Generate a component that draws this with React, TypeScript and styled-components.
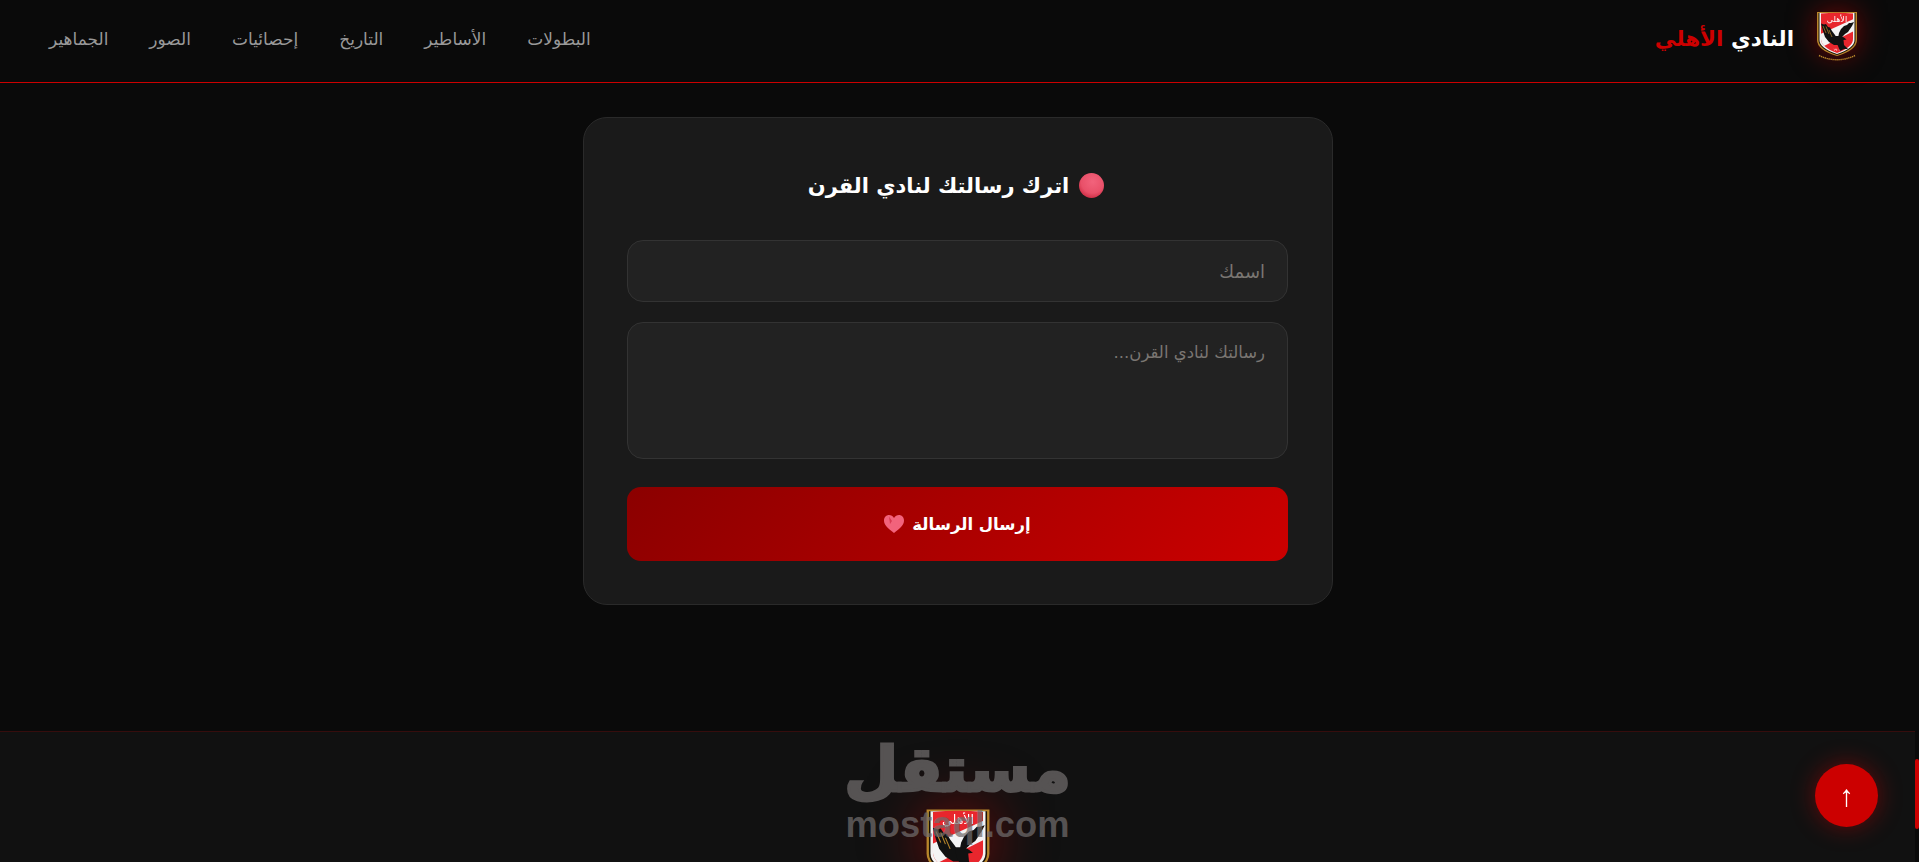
import React from "react";
import styled, { createGlobalStyle } from "styled-components";

const FONT = `"DejaVu Sans", sans-serif`;

const Global = createGlobalStyle`
  html, body { margin: 0; padding: 0; height: 100%; background: #0a0a0a; overflow: hidden; }
  * { box-sizing: border-box; }
  body { font-family: ${FONT}; color: #fff; }
`;

const Shell = styled.div`
  display: flex;
  flex-direction: row-reverse;
  height: 862px;
  overflow: hidden;
  background: #0a0a0a;
`;
const Rail = styled.div`
  width: 4px;
  flex: none;
  padding-top: 759px;
`;
const Thumb = styled.div`
  height: 70px;
  background: #cc0000;
  border-radius: 3px;
`;
const Page = styled.div`
  flex: 1;
  min-width: 0;
  direction: rtl;
`;
const Header = styled.header`
  height: 83px;
  border-bottom: 1px solid #cc0000;
  display: flex;
  align-items: center;
  justify-content: space-between;
  padding: 0 57px 5px 49px;
`;
const Brand = styled.div`
  display: flex;
  align-items: center;
  gap: 22px;
`;
const BrandName = styled.div`
  font-size: 21.5px;
  font-weight: 700;
  color: #fff;
  white-space: nowrap;
`;
const BrandAccent = styled.span`
  color: #cc0000;
`;
const Nav = styled.nav`
  display: flex;
  gap: 41px;
`;
const NavLink = styled.a`
  font-size: 17px;
  color: #999;
  white-space: nowrap;
`;
const Main = styled.main`
  padding: 34px 0 126px;
  display: flex;
  justify-content: center;
`;
const Card = styled.form`
  width: 750px;
  height: 488px;
  background: #1a1a1a;
  border: 1px solid #2a2a2a;
  border-radius: 24px;
  padding: 43px 43.5px;
  display: flex;
  flex-direction: column;
`;
const Title = styled.h2`
  margin: 0 0 31px;
  height: 48px;
  display: flex;
  align-items: center;
  justify-content: center;
  gap: 10px;
  font-size: 21px;
  font-weight: 700;
  color: #fff;
  padding: 1px 3px 0 0;
`;
const Field = styled.input`
  height: 62px;
  background: #222;
  border: 1px solid #333;
  border-radius: 16px;
  padding: 0 22px;
  font: 18px ${FONT};
  color: #fff;
  direction: rtl;
  margin-bottom: 20px;
  outline: none;
  &::placeholder { color: #7a7672; opacity: 1; }
`;
const Area = styled.textarea`
  height: 137px;
  background: #222;
  border: 1px solid #333;
  border-radius: 16px;
  padding: 20px 22px;
  font: 16.5px ${FONT};
  color: #fff;
  direction: rtl;
  resize: none;
  margin-bottom: 28px;
  outline: none;
  &::placeholder { color: #7a7672; opacity: 1; }
`;
const Send = styled.button`
  height: 74px;
  border: 0;
  border-radius: 14px;
  background: linear-gradient(135deg, #8b0000, #cc0000);
  color: #fff;
  font: 700 16.5px ${FONT};
  display: flex;
  align-items: center;
  justify-content: center;
  gap: 8px;
`;
const Footer = styled.footer`
  position: relative;
  height: 200px;
  background: #111;
  border-top: 1px solid rgba(204, 0, 0, 0.2);
  display: flex;
  justify-content: center;
  padding-top: 76px;
`;
const FooterLogo = styled.div`
  filter: drop-shadow(0 0 30px rgba(204, 0, 0, 0.55));
`;
const BrandLogo = styled.div`
  filter: drop-shadow(0 0 14px rgba(204, 0, 0, 0.55));
  display: flex;
  margin-bottom: 5px;
`;
const Watermark = styled.div`
  position: absolute;
  top: 1px;
  left: 0;
  right: 0;
  display: flex;
  flex-direction: column;
  align-items: center;
  pointer-events: none;
`;
const WatermarkAr = styled.div`
  font: 700 62px/74px ${FONT};
  color: #565353;
  -webkit-text-stroke: 3px #565353;
`;
const WatermarkEn = styled.div`
  font: 700 36.3px/36px "Liberation Sans", sans-serif;
  direction: ltr;
  color: rgba(112, 108, 108, 0.72);
`;
const TopButton = styled.button`
  position: fixed;
  left: 1815px;
  top: 764px;
  width: 63px;
  height: 63px;
  border: 0;
  border-radius: 50%;
  background: #cc0000;
  color: #fff;
  font: 30px "Liberation Sans", sans-serif;
  display: flex;
  align-items: center;
  justify-content: center;
  padding: 0;
  box-shadow: 0 0 25px rgba(204, 0, 0, 0.45);
`;

const Shield = ({ width }: { width: number }) => (
  <svg width={width} height={(width * 50) / 42} viewBox="0 0 42 50">
    <defs>
      <clipPath id="redpart">
        <path d="M5 2.5 Q21 1 37 2.5 L37 28 Q37 36 21 42 Q5 36 5 28 Z" />
      </clipPath>
    </defs>
    <path d="M1 1 L41 1 L41 29 Q41 39 21 45 Q1 39 1 29 Z" fill="#b8862b" />
    <path d="M2.5 2 L39.5 2 L39.5 29 Q39.5 38 21 44 Q2.5 38 2.5 29 Z" fill="#1a1208" />
    <path d="M3.5 2 L38.5 2 L38.5 29 Q38.5 37 21 43 Q3.5 37 3.5 29 Z" fill="#f4f4f4" />
    <g clipPath="url(#redpart)">
      <rect x="0" y="0" width="42" height="50" fill="#e8262d" />
      <polygon points="0,25 42,6 42,18 0,39" fill="#f4f4f4" />
    </g>
    <text x="21" y="10.5" fontSize="8" fill="#fff" textAnchor="middle" fontFamily="DejaVu Sans, sans-serif">الأهلي</text>
    <text x="21" y="40" fontSize="3.6" fill="#fff" textAnchor="middle" fontFamily="DejaVu Sans, sans-serif">١٩٠٧</text>
    <path d="M5 12.5 L8 13.5 L10 13 L12 16 L14 16.5 L16 20 L19 24 L22 29 L23 34 L18 34 L13 31 L9 26 L7 20 Z" fill="#111" />
    <path d="M38 11 L35 12 L33 12 L31 14 L28 15 L25 18 L23 22 L22 27 L26 26 L29 23 L32 21 L34 18 L36 15 Z" fill="#111" />
    <path d="M19 25 L25 25 L28 26.5 L30.5 28.5 L27.5 29 L28 34 L32 38 L28 38 L24 40 L22 35 L20 31 Z" fill="#111" />
    <path d="M7 15 L10 22 M10 15.5 L13 23 M13 19 L16 26" stroke="#b8862b" strokeWidth="0.7" fill="none" />
    <path d="M3 44.5 Q21 53 39 44.5" stroke="#b8862b" strokeWidth="1.4" strokeDasharray="1.4 .6" fill="none" />
  </svg>
);

const Ball = () => (
  <svg width="25" height="25" viewBox="0 0 25 25">
    <defs>
      <radialGradient id="ball" cx="55%" cy="35%" r="70%">
        <stop offset="0%" stopColor="#f2637c" />
        <stop offset="65%" stopColor="#e95069" />
        <stop offset="100%" stopColor="#c9283f" />
      </radialGradient>
    </defs>
    <circle cx="12.5" cy="12.5" r="12.5" fill="url(#ball)" />
  </svg>
);

const Heart = () => (
  <svg width="20" height="18" viewBox="0 0 20 18">
    <path d="M10 18 C4 13.5 0 10 0 5.5 C0 2.2 2.4 0 5 0 C7 0 9 1 10 3 C11 1 13 0 15 0 C17.6 0 20 2.2 20 5.5 C20 10 16 13.5 10 18 Z" fill="#f2637c" />
    <path d="M5 1.5 L8 6 L6 9 Z" fill="#d93a52" />
  </svg>
);

export default function App() {
  return (
    <>
      <Global />
      <Shell>
        <Rail>
          <Thumb />
        </Rail>
        <Page>
          <Header>
            <Brand>
              <BrandLogo>
                <Shield width={42} />
              </BrandLogo>
              <BrandName>
                النادي <BrandAccent>الأهلي</BrandAccent>
              </BrandName>
            </Brand>
            <Nav>
              <NavLink>البطولات</NavLink>
              <NavLink>الأساطير</NavLink>
              <NavLink>التاريخ</NavLink>
              <NavLink>إحصائيات</NavLink>
              <NavLink>الصور</NavLink>
              <NavLink>الجماهير</NavLink>
            </Nav>
          </Header>
          <Main>
            <Card>
              <Title>
                <Ball />
                اترك رسالتك لنادي القرن
              </Title>
              <Field placeholder="اسمك" />
              <Area placeholder="رسالتك لنادي القرن..." />
              <Send type="button">
                إرسال الرسالة
                <Heart />
              </Send>
            </Card>
          </Main>
          <Footer>
            <FooterLogo>
              <Shield width={66} />
            </FooterLogo>
            <Watermark>
              <WatermarkAr>مستقل</WatermarkAr>
              <WatermarkEn>mostaql.com</WatermarkEn>
            </Watermark>
          </Footer>
        </Page>
      </Shell>
      <TopButton type="button">↑</TopButton>
    </>
  );
}
